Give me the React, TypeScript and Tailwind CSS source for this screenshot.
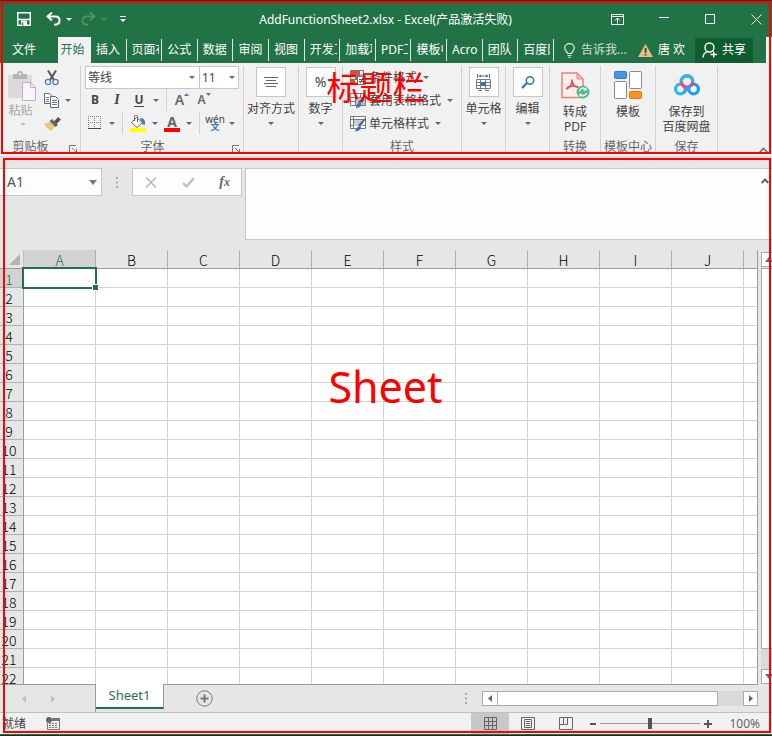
import React from "react";

const uiFont = "font-['Noto_Sans','Noto_Sans_CJK_SC',sans-serif]";

const ribbonTabs = [
  "插入", "页面布局", "公式", "数据", "审阅", "视图", "开发工具",
  "加载项", "PDF工具", "模板中心", "Acro", "团队", "百度网盘",
];
const columns = ["A", "B", "C", "D", "E", "F", "G", "H", "I", "J"];
const rows = Array.from({ length: 22 }, (_, i) => i + 1);

function Caret({ className = "text-[#666]" }: { className?: string }) {
  return (
    <svg width="6" height="3" viewBox="0 0 6 3" className={className} aria-hidden="true">
      <path d="M0 0h6L3 3z" fill="currentColor" />
    </svg>
  );
}

function CaretButton({ label }: { label: string }) {
  return (
    <button aria-label={label} className="flex h-[22px] w-3 items-center justify-center">
      <Caret />
    </button>
  );
}

function Tool({ label, children }: { label: string; children: React.ReactNode }) {
  return (
    <button aria-label={label} className="flex h-[22px] w-[22px] items-center justify-center">
      {children}
    </button>
  );
}

function Divider() {
  return <span className="mx-1 h-[22px] w-px bg-[#d2d2d2]" />;
}

function Group({ width, label, launcher, children }: {
  width: string;
  label?: string;
  launcher?: boolean;
  children: React.ReactNode;
}) {
  return (
    <section className={`flex shrink-0 flex-col border-r border-[#d2d2d2] ${width}`}>
      {children}
      {label && (
        <div className="mt-auto flex h-[15px] items-start">
          <span className={`flex-1 whitespace-nowrap text-center leading-4 text-[#666] ${launcher ? "pr-2" : ""}`}>{label}</span>
          {launcher && (
            <button aria-label={`${label}设置`} className="mr-[3px] pt-1.5">
              <svg width="8" height="8" viewBox="0 0 8 8" fill="none" stroke="#777">
                <path d="M.5 7V.5H7M3 3l4 4M7.500 4v3.500H4" />
              </svg>
            </button>
          )}
        </div>
      )}
    </section>
  );
}

function BoxedCommand({ label, children }: { label: string; children: React.ReactNode }) {
  return (
    <button className="flex flex-col items-center">
      <span className="flex h-[30px] w-[30px] items-center justify-center border border-[#c6c6c6] bg-[#fdfdfd]">{children}</span>
      <span className="mt-1 h-4 whitespace-nowrap leading-4">{label}</span>
      <span className="mt-[5px]"><Caret /></span>
    </button>
  );
}

function BigCommand({ lines, children }: { lines: string[]; children: React.ReactNode }) {
  return (
    <button className="flex flex-col items-center pt-px">
      <span className="mb-px flex h-9 items-center justify-center">{children}</span>
      {lines.map((line) => (
        <span key={line} className="h-[15px] whitespace-nowrap leading-[15px]">{line}</span>
      ))}
    </button>
  );
}

function StyleCommand({ label, children }: { label: string; children: React.ReactNode }) {
  return (
    <button className="flex h-[23px] items-center">
      <svg width="17" height="16" viewBox="0 0 17 16" fill="none" className="mr-0.5">{children}</svg>
      <span className="mr-1.5 whitespace-nowrap leading-4">{label}</span>
      <Caret />
    </button>
  );
}

function TitleBar() {
  return (
    <div className="flex h-9 items-center text-white">
      <div className="flex flex-1 items-center pl-[17px]">
        <button aria-label="保存">
          <svg width="14" height="14" viewBox="0 0 14 14" fill="none" stroke="white" strokeWidth="1.500">
            <path d="M.75.75h12.500v12.500H.75zM1 7.500h12" />
            <path d="M4 8.500h6v5H4z" fill="white" stroke="none" />
            <path d="M5.500 10.500v3" stroke="#217346" />
          </svg>
        </button>
        <button aria-label="撤消" className="ml-[15px]">
          <svg width="15" height="14" viewBox="0 0 15 14" fill="none" stroke="white" strokeWidth="2">
            <path d="M6 .5 1.500 4.500 6 8.500M2 4.500h7.500c2.500 0 4 1.600 4 4 0 2.700-2 4.300-5.500 4.300" />
          </svg>
        </button>
        <button aria-label="撤消列表" className="ml-[5px]"><Caret className="text-white" /></button>
        <button aria-label="恢复" className="ml-[9px]">
          <svg width="15" height="14" viewBox="0 0 15 14" fill="none" stroke="#4d9169" strokeWidth="2">
            <path d="m9 .5 4.500 4L9 8.500M13 4.500H5.500c-2.500 0-4 1.600-4 4 0 2.700 2 4.300 5.500 4.300" />
          </svg>
        </button>
        <button aria-label="恢复列表" className="ml-[5px]"><Caret className="text-[#4d9169]" /></button>
        <button aria-label="自定义快速访问工具栏" className="ml-[13px]">
          <svg width="6" height="6" viewBox="0 0 6 6" fill="white"><path d="M0 0h6v1H0zM0 3h6L3 6z" /></svg>
        </button>
      </div>
      <h1 className="whitespace-nowrap pr-2 pt-0.5 text-xs">AddFunctionSheet2.xlsx - Excel(产品激活失败)</h1>
      <div className="flex flex-1 items-center justify-end gap-[35px] pr-[10px]">
        <button aria-label="功能区显示选项">
          <svg width="13" height="11" viewBox="0 0 13 11" fill="none" stroke="white">
            <path d="M.5.5h12v10H.5zM.5 2.500h12M6.500 9.500V4.500M4 6.500l2.500-2.500L9 6.500" />
          </svg>
        </button>
        <button aria-label="最小化">
          <svg width="11" height="11" viewBox="0 0 11 11" stroke="white"><path d="M0 3.500h10" /></svg>
        </button>
        <button aria-label="最大化">
          <svg width="11" height="11" viewBox="0 0 11 11" fill="none" stroke="white"><path d="M.5.500h9v9h-9z" /></svg>
        </button>
        <button aria-label="关闭">
          <svg width="11" height="11" viewBox="0 0 11 11" stroke="white"><path d="m.5.5 10 10M10.500.500l-10 10" /></svg>
        </button>
      </div>
    </div>
  );
}

function TabStrip() {
  return (
    <nav className="flex h-[26px] items-center text-xs text-white">
      <button className="w-[58px] pr-[10px] text-center">文件</button>
      <button className="h-full w-[33px] bg-[#f1f1f1] pr-1 text-[#217346]">开始</button>
      <div className="flex w-[463px] shrink-0">
        {ribbonTabs.map((tab) => (
          <button key={tab} className="flex h-[22px] flex-1 items-center border-r border-[#dbe8e0] pl-[5px]">
            <span className="w-[27px] overflow-hidden whitespace-nowrap text-left leading-[22px]">{tab}</span>
          </button>
        ))}
      </div>
      <button className="ml-[10px] flex items-center text-[#cfe0d6]">
        <svg width="11" height="15" viewBox="0 0 11 15" fill="none" stroke="#e3eee8" strokeWidth="1.200" className="mr-1.5">
          <path d="M3.500 10.500c0-2-2.800-3-2.800-5.500a4.800 4.300 0 0 1 9.600 0c0 2.500-2.800 3.500-2.800 5.500zM3.500 12.500h4M4.500 14.300h2" />
        </svg>
        告诉我...
      </button>
      <span className="ml-auto flex items-center whitespace-nowrap">
        <svg width="15" height="13" viewBox="0 0 15 13" className="mr-[5px]">
          <path d="M7.500 0 15 13H0z" fill="#e8bf7c" />
          <path d="M6.700 4h1.800v5H6.700zM6.700 10h1.800v1.600H6.700z" fill="#444" />
        </svg>
        唐 欢
      </span>
      <button className="ml-[10px] flex h-[25px] w-[58px] items-center justify-center gap-1 bg-[#0f5c2f]">
        <svg width="16" height="16" viewBox="0 0 16 16" fill="none" stroke="white" strokeWidth="1.400">
          <circle cx="7.500" cy="5.500" r="4.500" />
          <path d="M1 15.500c.2-3.300 1.800-5 4-5.700M8.500 12.500H15M11.700 9.500v6" />
        </svg>
        共享
      </button>
      <span className="ml-[13px] h-full w-[6px] bg-[#f6f6f6]" />
    </nav>
  );
}

function ClipboardGroup() {
  return (
    <Group width="w-[81px]" label="剪贴板" launcher>
      <div className="flex pl-2">
        <button className="flex w-[29px] flex-col items-center pt-[5px] text-[#a6a6a6]">
          <svg width="29" height="31" viewBox="0 0 29 31">
            <path d="M0 4h24v23H0z" fill="#dcd8dc" />
            <path d="M5 8V3h4a3 3 0 0 1 6 0h4v5z" fill="#b5b5b5" />
            <circle cx="12" cy="3" r="1.300" fill="#f1f1f1" />
            <path d="M14.500 11.500h8l5 5v13h-13z" fill="#f9f3fb" stroke="#b9b3bd" />
            <path d="M22.500 11.500v5h5" fill="none" stroke="#b9b3bd" />
          </svg>
          <span className="mt-px h-4 pr-1 leading-4">粘贴</span>
          <span className="mt-1"><Caret className="text-[#c0c0c0]" /></span>
        </button>
        <div className="ml-[7px] flex flex-col items-start">
          <button aria-label="剪切" className="flex h-[23px] items-center">
            <svg width="16" height="16" viewBox="0 0 16 16" fill="none">
              <path d="M4 .5 10 10M12 .5 6 10" stroke="#555" strokeWidth="2" />
              <circle cx="4" cy="12" r="2.600" stroke="#4a7ebb" strokeWidth="1.300" />
              <circle cx="11.500" cy="12" r="2.600" stroke="#4a7ebb" strokeWidth="1.300" />
            </svg>
          </button>
          <span className="flex h-[23px] items-center">
            <button aria-label="复制">
              <svg width="16" height="15" viewBox="0 0 16 15" fill="#fff" stroke="#666">
                <path d="M.5.5h5l3 3v7h-8z" />
                <path d="M2 4.500h3M2 6.500h3M2 8.500h3" stroke="#4a7ebb" />
                <path d="M6.500 3.500h5l3 3v8h-8z" />
                <path d="M8 7.500h5M8 9.500h5M8 11.500h5" stroke="#4a7ebb" />
              </svg>
            </button>
            <button aria-label="复制选项" className="ml-[5px]"><Caret /></button>
          </span>
          <button aria-label="格式刷" className="flex h-[23px] items-center">
            <svg width="17" height="14" viewBox="0 0 17 14">
              <path d="M0 7 6 4.500 11 9.500 7 14C4 12 1.500 9.500 0 7z" fill="#ecc57f" />
              <path d="M5.500 4 8 2l6 6-2.500 2z" fill="#666" />
              <path d="m10 4.500 4-4.500 3 2.500-4.500 4.500z" fill="#555" />
            </svg>
          </button>
        </div>
      </div>
    </Group>
  );
}

function FontGroup() {
  return (
    <Group width="w-[163px]" label="字体" launcher>
      <div className="flex pl-1">
        <label className="relative flex h-[23px] w-[115px] items-center">
          <span className="sr-only">字体</span>
          <select className="h-full w-full appearance-none border border-[#c6c6c6] bg-white pl-0.5 text-xs text-[#444]"><option>等线</option></select>
          <span className="pointer-events-none absolute right-[5px]"><Caret /></span>
        </label>
        <label className="relative -ml-px flex h-[23px] w-[40px] items-center">
          <span className="sr-only">字号</span>
          <select className="h-full w-full appearance-none border border-[#c6c6c6] bg-white pl-0.5 text-xs text-[#444]"><option>11</option></select>
          <span className="pointer-events-none absolute right-[4px]"><Caret /></span>
        </label>
      </div>
      <div className="flex items-center pl-[3px]">
        <Tool label="加粗"><b className="text-xs">B</b></Tool>
        <Tool label="倾斜"><i className="font-['Liberation_Serif',serif] text-sm font-bold">I</i></Tool>
        <Tool label="下划线"><b className="border-b border-[#444] text-xs leading-3">U</b></Tool>
        <CaretButton label="下划线选项" />
        <Divider />
        <Tool label="增大字号">
          <span className="text-sm font-semibold text-[#666]">A</span>
          <svg width="5" height="3" viewBox="0 0 5 3" className="mb-3"><path d="M0 3h5L2.500 0z" fill="#4a7ebb" /></svg>
        </Tool>
        <Tool label="减小字号">
          <span className="text-xs font-semibold text-[#666]">A</span>
          <svg width="5" height="3" viewBox="0 0 5 3" className="mb-3"><path d="M0 0h5L2.500 3z" fill="#4a7ebb" /></svg>
        </Tool>
      </div>
      <div className="mt-px flex items-center pl-[3px]">
        <Tool label="边框">
          <svg width="14" height="14" viewBox="0 0 14 14" fill="none" stroke="#777">
            <path d="M.5 0v12M6.500 0v12M12.500 0v12M0 .5h13M0 6.500h13" strokeDasharray="1 1" />
            <path d="M0 12.500h13" stroke="#444" />
          </svg>
        </Tool>
        <CaretButton label="边框选项" />
        <Divider />
        <Tool label="填充颜色">
          <svg width="16" height="17" viewBox="0 0 16 17" fill="none">
            <path d="M10 3c4 0 5.500 2 5 7l-3-1z" fill="#4a7ebb" />
            <path d="m6.500 2.500 6 5-5.500 5-5.500-5z" fill="#fff" stroke="#666" />
            <path d="M4.500 6V1.500a1.500 1.500 0 0 1 3 0V7" stroke="#666" />
            <path d="M0 13h16v4H0z" fill="#ffff00" />
          </svg>
        </Tool>
        <CaretButton label="填充颜色选项" />
        <Tool label="字体颜色">
          <span className="border-b-4 border-[#ff0000] px-[3px] text-sm font-bold leading-[13px] text-[#666]">A</span>
        </Tool>
        <CaretButton label="字体颜色选项" />
        <Divider />
        <Tool label="拼音">
          <span className="flex flex-col items-center text-[10px] leading-[8px]">
            <span>wén</span>
            <span className="text-[9px] font-bold text-[#3c72b0]">文</span>
          </span>
        </Tool>
        <CaretButton label="拼音选项" />
      </div>
    </Group>
  );
}

function Ribbon() {
  return (
    <div className="flex h-[94px] border-b border-[#d5d5d5] bg-[#f1f1f1] pb-0.5 pt-[3px] text-xs text-[#444]">
      <ClipboardGroup />
      <FontGroup />
      <Group width="w-[55px] pt-px">
        <BoxedCommand label="对齐方式">
          <svg width="14" height="11" viewBox="0 0 14 11" stroke="#666"><path d="M0 .5h14M2 3.500h10M0 6.500h14M2 9.500h10" /></svg>
        </BoxedCommand>
      </Group>
      <Group width="w-11 pt-px">
        <BoxedCommand label="数字"><span className="text-sm">%</span></BoxedCommand>
      </Group>
      <Group width="w-[119px]" label="样式">
        <div className="flex flex-col items-start pl-[7px]">
          <StyleCommand label="条件格式">
            <path d="M.5.500h13v13H.5zM.5 5h13M.5 9.500h13M9.500.500v13" stroke="#777" />
            <path d="M1 1h8v4H1zM1 9h4v4H1z" fill="#d9532c" />
            <path d="M5 5h4v4H5z" fill="#4a7ebb" />
            <path d="M7.500 6.500h8v8h-8z" fill="#fff" stroke="#777" />
            <path d="M9 9.500h5M9 11.500h5M13 8l-3 5" stroke="#555" />
          </StyleCommand>
          <StyleCommand label="套用表格格式">
            <path d="M.5.500h15v12H.5zM.5 4.500h15M.5 8.500h15M5.500.500v12M10.500.500v12" fill="#fff" stroke="#777" />
            <path d="M6 5h9v7H6z" fill="#a9c4e4" />
            <path d="m16 3-6 8-2-2 7-7z" fill="#666" />
            <path d="M6 15c0-3 1.500-5 4-5 2 1 2 4-4 5z" fill="#3c72b0" />
          </StyleCommand>
          <StyleCommand label="单元格样式">
            <path d="M.5.500h15v12H.5zM.5 3.500h15M.5 9.500h15M3.500.500v12" fill="#fff" stroke="#777" />
            <path d="M4 4h9v6H4z" fill="#bcd0e8" />
            <path d="m16 3-6 8-2-2 7-7z" fill="#666" />
            <path d="M5 15.500c1-3 2.500-5.500 5-5.500 2 1 1 5-5 5.500z" fill="#3c72b0" />
          </StyleCommand>
        </div>
      </Group>
      <Group width="w-11 pt-px">
        <BoxedCommand label="单元格">
          <svg width="15" height="17" viewBox="0 0 15 17" fill="none">
            <path d="M1.500 0v4M13.500 0v4M3 2h9" stroke="#3c72b0" />
            <path d="M5 .500v3L2.500 2zM10 .500v3L12.500 2z" fill="#3c72b0" />
            <path d="M.5 5.500h14v9H.5zM.5 8.500h14M.5 11.500h14M4.500 5.500v10M9.500 5.500v10" stroke="#777" />
            <path d="M5 8h5v4H5z" fill="#2f6fb5" />
            <path d="M2 16.500h4M9 16.500h4" stroke="#777" />
          </svg>
        </BoxedCommand>
      </Group>
      <Group width="w-11 pt-px">
        <BoxedCommand label="编辑">
          <svg width="14" height="13" viewBox="0 0 14 13" fill="none" stroke="#3c72b0">
            <circle cx="9" cy="4.500" r="3.700" strokeWidth="1.500" />
            <path d="M6 7 1 12" strokeWidth="2.400" />
          </svg>
        </BoxedCommand>
      </Group>
      <Group width="w-[51px]" label="转换">
        <BigCommand lines={["转成", "PDF"]}>
          <svg width="29" height="27" viewBox="0 0 29 27" fill="none">
            <path d="M1 1h15l6 6v18.500H1z" fill="#fdeeee" stroke="#e88080" strokeWidth="1.500" />
            <path d="M16 1v6h6z" fill="#f4b9b9" stroke="#e88080" />
            <path d="M5 17c5-2 6.500-6 6-9.500M11 9c.5 4 3 6 7 6.500M5 17c3-3 7-4 12-2" stroke="#e04a4a" strokeWidth="1.600" />
            <circle cx="22" cy="20" r="6.500" fill="#56bb8b" />
            <path d="M18.500 19a3.700 3.700 0 0 1 6.500-1.500v-2M25.500 21a3.700 3.700 0 0 1-6.500 1.500v2M22.500 18H25M19 22.500h2.500" stroke="#fff" strokeWidth="1.200" />
          </svg>
        </BigCommand>
      </Group>
      <Group width="w-[55px]" label="模板中心">
        <BigCommand lines={["模板"]}>
          <svg width="28" height="28" viewBox="0 0 28 28" fill="#fff" stroke="#888">
            <rect x=".5" y=".5" width="12" height="7" rx="1" fill="#3f95e8" stroke="#2f7fd0" />
            <rect x="15.500" y=".5" width="12" height="17" rx="1" />
            <rect x=".5" y="10.500" width="12" height="17" rx="1" />
            <rect x="15.500" y="20.500" width="12" height="7" rx="1" fill="#ff9123" stroke="#e07a10" />
          </svg>
        </BigCommand>
      </Group>
      <Group width="w-[62px]" label="保存">
        <BigCommand lines={["保存到", "百度网盘"]}>
          <svg width="26" height="22" viewBox="0 0 26 22" fill="none" strokeWidth="3.200">
            <circle cx="6.400" cy="15" r="4.800" stroke="#25b9f2" />
            <circle cx="19.600" cy="15" r="4.800" stroke="#1c9df5" />
            <circle cx="13" cy="7.500" r="5.700" stroke="#f7476b" />
            <path d="M7.300 7.500a5.700 5.700 0 0 1 11.400 0" stroke="#22bdf5" />
            <path d="M9.500 18.500c2-1 4.500-4 7-7" stroke="#25a9f2" />
          </svg>
        </BigCommand>
      </Group>
      <button aria-label="折叠功能区" className="ml-auto self-end pb-px pr-1">
        <svg width="9" height="6" viewBox="0 0 9 6" fill="none" stroke="#666" strokeWidth="1.600"><path d="m.7 5.300 3.800-4 3.800 4" /></svg>
      </button>
    </div>
  );
}

function Grip() {
  return (
    <svg width="2" height="11" viewBox="0 0 2 11" fill="#aaa" aria-hidden="true"><path d="M0 0h2v2H0zM0 4.500h2v2H0zM0 9h2v2H0z" /></svg>
  );
}

function FormulaBar() {
  return (
    <div className="flex items-start pt-[11px]">
      <label className="relative flex h-7 w-[102px] items-center">
        <span className="sr-only">名称框</span>
        <input defaultValue="A1" className="h-full w-full border border-l-0 border-[#c6c6c6] bg-[#fdfdfd] pb-0.5 pl-[7px] text-sm text-[#555]" />
        <svg width="8" height="5" viewBox="0 0 8 5" className="pointer-events-none absolute right-[5px]"><path d="M0 0h8L4 5z" fill="#777" /></svg>
      </label>
      <span className="flex h-7 w-[30px] items-center justify-center"><Grip /></span>
      <div className="mr-[3px] flex h-7 w-[110px] items-center justify-between border border-[#c6c6c6] bg-[#fdfdfd] pl-3 pr-[11px]">
        <button aria-label="取消"><svg width="12" height="11" viewBox="0 0 12 11" stroke="#bbb" strokeWidth="1.600"><path d="m1 .5 10 10M11 .500l-10 10" /></svg></button>
        <button aria-label="输入"><svg width="13" height="11" viewBox="0 0 13 11" fill="none" stroke="#c0c0c0" strokeWidth="2.400"><path d="m1 6 3.500 3.500L12 1" /></svg></button>
        <button aria-label="插入函数" className="font-['Liberation_Serif',serif] text-sm font-bold italic leading-5 text-[#666]">f<span className="text-xs">x</span></button>
      </div>
      <div className="relative flex flex-1">
        <textarea aria-label="编辑栏" className="h-[72px] w-full resize-none border border-r-0 border-[#c6c6c6] bg-[#fdfdfd] p-1 text-sm" />
        <button aria-label="折叠编辑栏" className="absolute right-[3px] top-[10px]">
          <svg width="8" height="6" viewBox="0 0 8 6" fill="none" stroke="#666" strokeWidth="2"><path d="m.7 5 3.300-3.500L7.300 5" /></svg>
        </button>
      </div>
    </div>
  );
}

function Sheet() {
  return (
    <div className="flex min-h-0 flex-1 pt-[10px]">
      <div className="min-w-0 flex-1 overflow-hidden border-r border-[#9b9b9b] bg-white">
        <table className="w-full table-fixed border-separate border-spacing-0 font-['Noto_Sans_CJK_SC',sans-serif] text-sm leading-[18px] text-black">
          <colgroup>
            <col className="w-6" />
            {columns.map((c) => <col key={c} className="w-[72px]" />)}
            <col />
          </colgroup>
          <thead>
            <tr className="bg-[#e6e6e6]">
              <th aria-label="全选" className="h-[19px] border-b border-r border-b-[#9b9b9b] border-r-[#c0c0c0] p-0">
                <svg width="11" height="11" viewBox="0 0 11 11" className="ml-[9px]"><path d="M11 0v11H0z" fill="#b4b4b4" /></svg>
              </th>
              {columns.map((c) => (
                <th key={c} scope="col" className={`h-[19px] border-b border-r border-b-[#9b9b9b] border-r-[#b0b0b0] p-0 font-light ${c === "A" ? "bg-[#d2d2d2] text-[#217346]" : ""}`}>
                  <span className="block h-[18px] overflow-hidden leading-5">{c}</span>
                </th>
              ))}
              <th className="h-[19px] border-b border-[#9b9b9b] p-0" />
            </tr>
          </thead>
          <tbody>
            {rows.map((r) => (
              <tr key={r}>
                <th scope="row" className={`h-[19px] border-b border-r border-b-[#b0b0b0] border-r-[#9b9b9b] p-0 pr-[5px] font-light ${r === 1 ? "bg-[#d2d2d2] text-[#217346]" : "bg-[#e6e6e6]"}`}>
                  <span className="block h-[18px] leading-[21px]">{r}</span>
                </th>
                {columns.map((c) => (
                  <td key={c} className="relative h-[19px] border-b border-r border-[#d2d2d2] p-0">
                    {r === 1 && c === "A" && (
                      <span className="absolute -bottom-0.5 -left-0.5 -right-0.5 -top-0.5 z-10 border-2 border-[#217346]">
                        <span className="absolute -bottom-[4px] -right-[4px] h-[7px] w-[7px] border border-white bg-[#217346]" />
                      </span>
                    )}
                  </td>
                ))}
                <td className="h-[19px] border-b border-[#d2d2d2] p-0" />
              </tr>
            ))}
          </tbody>
        </table>
      </div>
      <div className="ml-[3px] flex w-[11px] flex-col overflow-hidden pt-0.5">
        <button aria-label="向上滚动" className="flex h-[15px] w-[17px] shrink-0 items-center border border-[#ababab] bg-white pl-[3px]">
          <svg width="8" height="5" viewBox="0 0 8 5"><path d="M4 0 8 5H0z" fill="#666" /></svg>
        </button>
        <div className="mt-px w-[17px] flex-1 border border-[#ababab] bg-white" />
        <div className="h-5 bg-[#dadada]" />
        <button aria-label="向下滚动" className="flex h-[15px] w-[17px] shrink-0 items-center border border-[#ababab] bg-white pl-[3px]">
          <svg width="8" height="5" viewBox="0 0 8 5"><path d="M0 0h8L4 5z" fill="#666" /></svg>
        </button>
      </div>
    </div>
  );
}

function SheetTabs() {
  return (
    <div className="flex h-7 shrink-0 pr-[14px]">
      <div className="flex w-24 items-center gap-[25px] border-r border-t border-[#9b9b9b] pl-[22px]">
        <button aria-label="上一张"><svg width="4" height="8" viewBox="0 0 4 8"><path d="M4 0v8L0 4z" fill="#c0c0c0" /></svg></button>
        <button aria-label="下一张"><svg width="4" height="8" viewBox="0 0 4 8"><path d="M0 0v8l4-4z" fill="#c0c0c0" /></svg></button>
      </div>
      <button className="h-[25px] w-[68px] border-b-2 border-r border-b-[#217346] border-r-[#9b9b9b] bg-white text-[13px] text-[#217346]">Sheet1</button>
      <div className="flex flex-1 items-center border-t border-[#9b9b9b] pl-8">
        <button aria-label="新工作表">
          <svg width="17" height="17" viewBox="0 0 17 17" fill="none" stroke="#777"><circle cx="8.500" cy="8.500" r="7.700" /><path d="M4.500 8.500h8M8.500 4.500v8" strokeWidth="2" /></svg>
        </button>
        <span className="ml-auto mr-[15px]"><Grip /></span>
        <div className="flex h-[15px] w-[276px] bg-[#dadada]">
          <button aria-label="向左滚动" className="flex w-4 items-center justify-center border border-[#ababab] bg-white">
            <svg width="4" height="7" viewBox="0 0 4 7"><path d="M4 0v7L0 3.500z" fill="#666" /></svg>
          </button>
          <div className="-ml-px w-[221px] border border-[#ababab] bg-white" />
          <button aria-label="向右滚动" className="ml-auto flex w-[15px] items-center justify-center border border-[#ababab] bg-white">
            <svg width="4" height="7" viewBox="0 0 4 7"><path d="M0 0v7l4-3.500z" fill="#666" /></svg>
          </button>
        </div>
      </div>
    </div>
  );
}

function StatusBar() {
  return (
    <footer className="flex h-[22px] shrink-0 items-center border-t border-[#c0c0c0] bg-[#f1f1f1] pl-0.5 pr-3 text-xs text-[#444]">
      <span>就绪</span>
      <button aria-label="录制宏" className="ml-5">
        <svg width="14" height="13" viewBox="0 0 14 13" fill="none">
          <path d="M6 1.500h7.500v11h-12V6" stroke="#777" />
          <path d="M6 1h8v3H6z" fill="#777" />
          <path d="M3 6.500h9M3 8.500h9M3 10.500h9" stroke="#777" strokeDasharray="2 1" />
          <circle cx="3" cy="3" r="3" fill="#666" />
        </svg>
      </button>
      <button aria-label="普通" className="ml-auto flex h-full w-[38px] items-center justify-center bg-[#c8c8c8]">
        <svg width="13" height="13" viewBox="0 0 13 13" fill="none" stroke="#666"><path d="M.5.500h12v12H.5zM.5 4.500h12M.5 8.500h12M4.500.500v12M8.500.500v12" /></svg>
      </button>
      <button aria-label="页面布局" className="flex w-[38px] items-center justify-center">
        <svg width="14" height="13" viewBox="0 0 14 13" fill="none" stroke="#666"><path d="M.5.500h13v12H.5zM3.500 2.500h7v8h-7zM5 4.500h4M5 6.500h4M5 8.500h4" /></svg>
      </button>
      <button aria-label="分页预览" className="flex w-[38px] items-center justify-center">
        <svg width="14" height="13" viewBox="0 0 14 13" fill="none" stroke="#666"><path d="M.5.500h13v12H.5zM.5 7.500h8v-7M4.500.500v7" /></svg>
      </button>
      <button aria-label="缩小" className="ml-[5px]"><svg width="6" height="2" viewBox="0 0 6 2"><path d="M0 0h6v2H0z" fill="#555" /></svg></button>
      <input
        type="range"
        aria-label="显示比例"
        min={0}
        max={200}
        defaultValue={100}
        className="mx-1 h-3 w-[100px] appearance-none bg-transparent [&::-webkit-slider-runnable-track]:h-px [&::-webkit-slider-runnable-track]:bg-[#999] [&::-webkit-slider-thumb]:-mt-[5px] [&::-webkit-slider-thumb]:h-[11px] [&::-webkit-slider-thumb]:w-1 [&::-webkit-slider-thumb]:appearance-none [&::-webkit-slider-thumb]:bg-[#555]"
      />
      <button aria-label="放大"><svg width="8" height="8" viewBox="0 0 8 8"><path d="M0 3h8v2H0zM3 0h2v8H3z" fill="#555" /></svg></button>
      <span className="ml-4 w-8 text-right text-xs text-[#666]">100%</span>
    </footer>
  );
}

export default function App() {
  return (
    <div className={`relative flex h-screen flex-col overflow-hidden bg-[#e6e6e6] ${uiFont}`}>
      <header className="shrink-0 border-t border-[#333] bg-[#217346]">
        <TitleBar />
        <TabStrip />
        <Ribbon />
      </header>
      <FormulaBar />
      <Sheet />
      <SheetTabs />
      <StatusBar />
      <div className="h-0.5 shrink-0 border-b border-[#1a2b22] bg-[#217346]" />

      {/* Annotation frames over the two regions of the window */}
      <div className="pointer-events-none absolute left-px right-px top-px z-20 flex h-[153px] items-center justify-center border-2 border-[#ff0000]">
        <span className="pr-5 pt-4 font-['Noto_Sans_CJK_SC',sans-serif] text-[33px] leading-10 text-[#ff0000]">标题栏</span>
      </div>
      <div className="pointer-events-none absolute bottom-[3px] left-[3px] right-px top-[158px] z-20 flex items-center justify-center border-2 border-[#ff0000]">
        <span className="pb-[118px] pr-[3px] font-['Noto_Sans',sans-serif] text-[43px] leading-none text-[#ff0000]">Sheet</span>
      </div>
    </div>
  );
}
